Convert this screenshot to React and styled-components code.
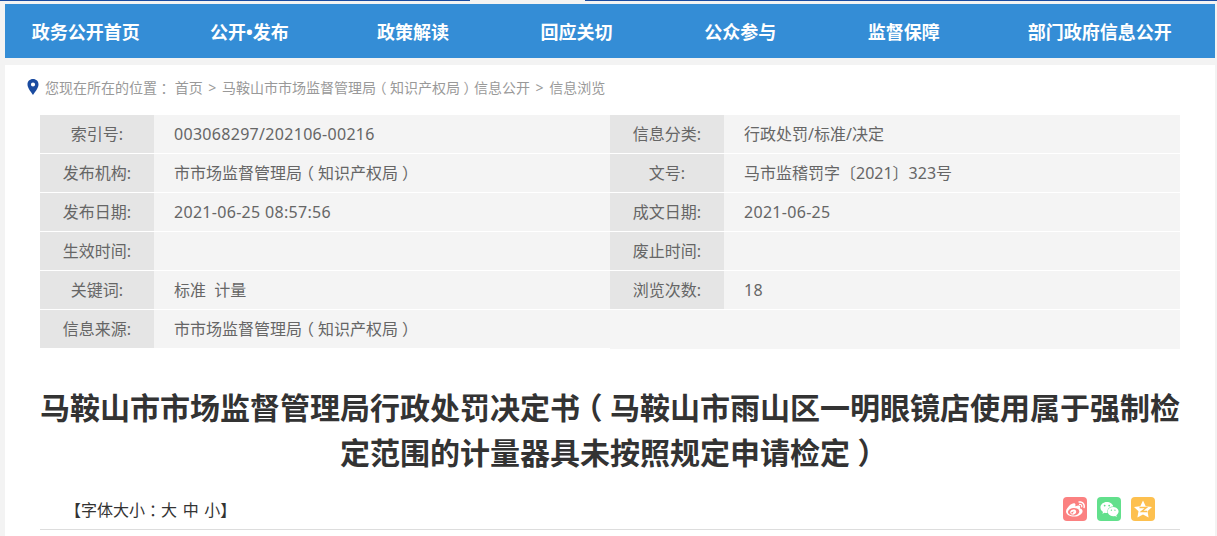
import React from 'react';
import styled, { createGlobalStyle } from 'styled-components';
import { FaWeibo, FaWeixin } from 'react-icons/fa';

const GlobalStyle = createGlobalStyle`
  html, body {
    margin: 0;
    padding: 0;
    background: #f3f3f3;
  }

  body {
    font-family: "Noto Sans", "Noto Sans CJK SC", sans-serif;
  }
`;

const StyledTopLine = styled.div`
  height: 1px;
  margin-bottom: 3px;
  background: linear-gradient(
    to right,
    #1a4ba0 470px,
    #f3f3f3 470px,
    #f3f3f3 585px,
    #1a4ba0 585px
  );
`;

const StyledPage = styled.div`
  height: 536px;
  overflow: hidden;
`;

const StyledBody = styled.div`
  padding: 0 2px 0 5px;
`;

const StyledNav = styled.ul`
  display: flex;
  height: 54px;
  margin: 0 0 7px;
  padding: 0;
  list-style: none;
  background: #348dd6;
`;

const StyledNavItem = styled.li`
  flex: ${(props) => (props.$wide ? '1' : '0 0 163.6px')};
  box-sizing: border-box;
  padding-right: 2px;
  color: #ffffff;
  font-size: 18px;
  font-weight: bold;
  line-height: 56px;
  text-align: center;
`;

const StyledMain = styled.div`
  height: 471px;
  padding: 0 35px;
  background: #ffffff;
`;

const StyledCrumbs = styled.div`
  display: flex;
  align-items: center;
  gap: 6px;
  height: 44px;
  padding-bottom: 6px;
  margin-left: -13px;
  color: #999999;
  font-size: 14px;
`;

const StyledSep = styled.span`
  margin: 0 2px;
`;

const StyledGrid = styled.div`
  display: grid;
  grid-template-columns: 114px 456px 114px 456px;
  grid-auto-rows: 38px;
  row-gap: 1px;
`;

const StyledLabel = styled.div`
  background: #e5e5e5;
  color: #666666;
  font-size: 16px;
  line-height: 38px;
  text-align: center;
`;

const StyledValue = styled.div`
  padding-left: 20px;
  background: #f4f4f4;
  color: #666666;
  font-size: 16px;
  line-height: 38px;
  white-space: pre;
  letter-spacing: ${(props) => (props.$numeric ? '0.3px' : '0')};
`;

const StyledEmptyCell = styled.div`
  grid-column: span 2;
  height: 39px;
  background: #f5f5f5;
`;

const StyledTitle = styled.h1`
  margin: 37px 0 0;
  color: #333333;
  font-size: 30px;
  font-weight: bold;
  line-height: 45px;
  text-align: center;
`;

const StyledTools = styled.div`
  display: flex;
  align-items: center;
  justify-content: space-between;
  height: 24px;
  margin-top: 10px;
  padding: 12px 25px 8px;
  border-bottom: 1px solid #dddddd;
  color: #333333;
  font-size: 16px;
`;

const StyledFontSize = styled.span`
  margin-top: 2px;
  line-height: 22px;
  word-spacing: 1.5px;
`;

const StyledShare = styled.div`
  display: flex;
  gap: 10px;
`;

const StyledShareIcon = styled.span`
  display: flex;
  align-items: center;
  justify-content: center;
  width: 24px;
  height: 24px;
  border-radius: 4px;
  background: ${(props) => props.color};
  color: #ffffff;
`;

// fullwidth punctuation sits centred in its box in the reference
const StyledPunct = styled.span`
  padding: 0 0.25em;
  font-feature-settings: "halt";
`;

const withPunct = (text) =>
  text.split(/([（）：])/).map((part, i) =>
    /^[（）：]$/.test(part) ? <StyledPunct key={i}>{part}</StyledPunct> : part
  );

const PinIcon = () => (
  <svg width="12" height="16" viewBox="0 0 12 16">
    <path
      fill="#1a4ba0"
      fillRule="evenodd"
      d="M6 0C2.700 0 .5 2.400.5 5.400.5 9 4.400 13.400 6 16c1.600-2.600 5.500-7 5.500-10.600C11.500 2.400 9.300 0 6 0zm0 3.400a2.100 2.100 0 1 1 0 4.200 2.100 2.100 0 0 1 0-4.200z"
    />
  </svg>
);

const QzoneIcon = () => (
  <svg width="24" height="24" viewBox="0 0 24 24">
    <path
      fill="#ffffff"
      d="M12 3.500l2.700 5.700 6.300.8-4.500 4.300 1.100 6.200L12 17.500l-5.600 3 1.100-6.200L3 10l6.300-.8z"
    />
    <path d="M8.500 10.500h7l-5 4h5.500" fill="none" stroke="#fdc04f" strokeWidth="1.400" />
  </svg>
);

const navItems = [
  '政务公开首页',
  '公开•发布',
  '政策解读',
  '回应关切',
  '公众参与',
  '监督保障',
  '部门政府信息公开',
];

const bureau = '市市场监督管理局（知识产权局）';

const metaRows = [
  ['索引号:', '003068297/202106-00216', '信息分类:', '行政处罚/标准/决定'],
  ['发布机构:', bureau, '文号:', '马市监稽罚字〔2021〕323号'],
  ['发布日期:', '2021-06-25 08:57:56', '成文日期:', '2021-06-25'],
  ['生效时间:', '', '废止时间:', ''],
  ['关键词:', '标准  计量', '浏览次数:', '18'],
];

const isNumeric = (text) => /^[\d\s:/-]+$/.test(text);

const App = () => (
  <StyledPage>
    <GlobalStyle />
    <StyledTopLine />
    <StyledBody>
      <StyledNav>
        {navItems.map((item, i) => (
          <StyledNavItem key={item} $wide={i === navItems.length - 1}>
            {item}
          </StyledNavItem>
        ))}
      </StyledNav>

      <StyledMain>
        <StyledCrumbs>
          <PinIcon />
          <span>
            {withPunct('您现在所在的位置：')} 首页 <StyledSep>&gt;</StyledSep> {withPunct('马鞍山市市场监督管理局（知识产权局）信息公开')} <StyledSep>&gt;</StyledSep> 信息浏览
          </span>
        </StyledCrumbs>

        <StyledGrid>
          {metaRows.map((row) => (
            <React.Fragment key={row[0]}>
              <StyledLabel>{row[0]}</StyledLabel>
              <StyledValue $numeric={isNumeric(row[1])}>{withPunct(row[1])}</StyledValue>
              <StyledLabel>{row[2]}</StyledLabel>
              <StyledValue $numeric={isNumeric(row[3])}>{row[3]}</StyledValue>
            </React.Fragment>
          ))}
          <StyledLabel>信息来源:</StyledLabel>
          <StyledValue>{withPunct(bureau)}</StyledValue>
          <StyledEmptyCell />
        </StyledGrid>

        <StyledTitle>
          {withPunct('马鞍山市市场监督管理局行政处罚决定书（马鞍山市雨山区一明眼镜店使用属于强制检定范围的计量器具未按照规定申请检定）')}
        </StyledTitle>

        <StyledTools>
          <StyledFontSize>【字体大小{withPunct('：')}大 中 小】</StyledFontSize>
          <StyledShare>
            <StyledShareIcon color="#fb8181"><FaWeibo size={19} /></StyledShareIcon>
            <StyledShareIcon color="#62e08c"><FaWeixin size={19} /></StyledShareIcon>
            <StyledShareIcon color="#fdc04f"><QzoneIcon /></StyledShareIcon>
          </StyledShare>
        </StyledTools>
      </StyledMain>
    </StyledBody>
  </StyledPage>
);

export default App;
